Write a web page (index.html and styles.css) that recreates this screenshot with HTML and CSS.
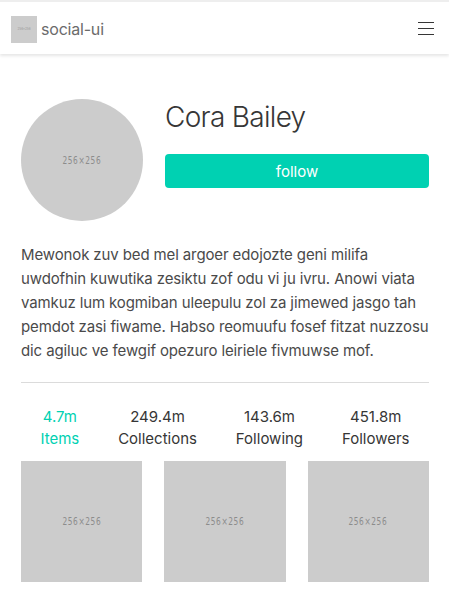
FILE: index.html
```html
<!DOCTYPE html>
<html>
<head>
<meta charset="utf-8">
<link rel="stylesheet" href="styles.css">
</head>
<body>
<header class="navbar">
  <div class="brand">
    <div class="logo"><span>256×256</span></div>
    <span class="brand-name">social-ui</span>
  </div>
  <div class="burger"><span></span><span></span><span></span></div>
</header>
<main class="page">
  <section class="profile">
    <div class="avatar"><span class="ph">256×256</span></div>
    <div class="info">
      <h1 class="name">Cora Bailey</h1>
      <button class="follow">follow</button>
    </div>
  </section>
  <p class="bio">Mewonok zuv bed mel argoer edojozte geni milifa uwdofhin kuwutika zesiktu zof odu vi ju ivru. Anowi viata vamkuz lum kogmiban uleepulu zol za jimewed jasgo tah pemdot zasi fiwame. Habso reomuufu fosef fitzat nuzzosu dic agiluc ve fewgif opezuro leiriele fivmuwse mof.</p>
  <hr class="divider">
  <nav class="stats">
    <div class="stat active"><div>4.7m</div><div>Items</div></div>
    <div class="stat"><div>249.4m</div><div>Collections</div></div>
    <div class="stat"><div>143.6m</div><div>Following</div></div>
    <div class="stat"><div>451.8m</div><div>Followers</div></div>
  </nav>
  <section class="grid">
    <div class="tile"><span class="ph">256×256</span></div>
    <div class="tile"><span class="ph">256×256</span></div>
    <div class="tile"><span class="ph">256×256</span></div>
  </section>
</main>
</body>
</html>
```
FILE: styles.css
```css
* { box-sizing: border-box; }
html, body { margin: 0; padding: 0; background: #fff; }
body {
  font-family: Inter, "Noto Sans", sans-serif;
  color: #4a4a4a;
  overflow: hidden;
}
.navbar {
  border-top: 2px solid #eeeeee;
  height: 54px;
  display: flex;
  align-items: center;
  justify-content: space-between;
  padding: 0 15px 0 11px;
  box-shadow: 0 2px 3px rgba(10,10,10,0.1);
  position: relative;
}
.brand { display: flex; align-items: center; gap: 4px; margin-top: 2px; }
.logo {
  width: 26px; height: 27px; background: #cccccc;
  display: flex; align-items: center; justify-content: center;
}
.logo span { font-size: 3px; color: #999; }
.brand-name { font-size: 16px; color: #6b6b6b; letter-spacing: -0.2px; }
.burger { width: 16px; display: flex; flex-direction: column; gap: 5px; margin-top: 1px; }
.burger span { display: block; height: 1px; background: #363636; }
.page { padding: 45px 20px 0 21px; }
.profile { display: flex; gap: 22px; }
.avatar {
  width: 122px; height: 122px; border-radius: 50%; background: #cccccc;
  flex: none; display: flex; align-items: center; justify-content: center;
}
.ph {
  font-family: "DejaVu Sans", sans-serif; font-stretch: condensed;
  font-size: 11px; color: #8c8c8c; letter-spacing: 0.8px;
  transform: scaleX(0.75);
}
.info { flex: 1; }
.name {
  margin: 0; font-size: 28px; font-weight: 300; line-height: 36px;
  color: #363636; letter-spacing: -0.7px;
}
.follow {
  margin-top: 19px; width: 100%; height: 34px; border: none; border-radius: 4px;
  background: #00d1b2; color: #fff; font-family: inherit; font-size: 15px;
}
.bio {
  margin: 22px 0 0; font-size: 15px; line-height: 24px; color: #4a4a4a;
  letter-spacing: -0.12px;
}
.divider { border: none; border-top: 1px solid #dbdbdb; margin: 19px 0 0; }
.stats {
  display: flex; justify-content: space-around; padding-top: 23px;
  font-size: 15px; line-height: 22px; color: #363636;
}
.stat { text-align: center; }
.stat.active { color: #00d1b2; }
.grid {
  display: grid; grid-template-columns: repeat(3, 1fr); gap: 22px; margin-top: 11px;
}
.tile {
  height: 121px; background: #cccccc;
  display: flex; align-items: center; justify-content: center;
}
```
